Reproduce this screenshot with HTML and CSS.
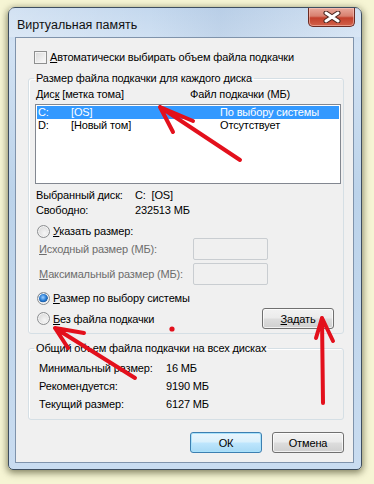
FILE: index.html
```html
<!DOCTYPE html>
<html lang="ru">
<head>
  <meta charset="UTF-8">
  <title>Виртуальная память</title>
  <link rel="stylesheet" href="styles.css">
</head>
<body>

<div class="desktop">
  <div class="dialog">
    <div class="titlebar">
      <span class="title">Виртуальная память</span>
      <button class="close" aria-label="Закрыть">
        <svg width="18" height="12" viewBox="0 0 18 12">
          <path d="M3 2 L15 10 M15 2 L3 10" stroke="#4a2620" stroke-width="5" stroke-linecap="round"/>
          <path d="M3 2 L15 10 M15 2 L3 10" stroke="#fff" stroke-width="3" stroke-linecap="round"/>
        </svg>
      </button>
    </div>

    <div class="client">
      <label class="check-row">
        <span class="checkbox"></span>
        <span><u>А</u>втоматически выбирать объем файла подкачки</span>
      </label>

      <fieldset class="group group-disks">
        <legend>Размер файла подкачки для каждого диска</legend>
        <div class="list-head">
          <span class="head-disk">Дис<u>к</u> [метка тома]</span>
          <span>Файл подкачки (МБ)</span>
        </div>
        <div class="listbox">
          <div class="list-row selected">
            <span class="col-drive">C:</span><span class="col-label">[OS]</span><span>По выбору системы</span>
          </div>
          <div class="list-row">
            <span class="col-drive">D:</span><span class="col-label">[Новый том]</span><span>Отсутствует</span>
          </div>
        </div>

        <div class="info">
          <span>Выбранный диск:</span><span>C:&nbsp;&nbsp;[OS]</span>
          <span>Свободно:</span><span>232513 МБ</span>
        </div>

        <label class="radio-row first">
          <span class="radio"></span>
          <span><u>У</u>казать размер:</span>
        </label>
        <div class="size-row">
          <span class="size-label"><u>И</u>сходный размер (МБ):</span>
          <span class="edit"></span>
        </div>
        <div class="size-row">
          <span class="size-label"><u>М</u>аксимальный размер (МБ):</span>
          <span class="edit"></span>
        </div>

        <label class="radio-row system">
          <span class="radio checked"></span>
          <span><u>Р</u>азмер по выбору системы</span>
        </label>
        <div class="last-row">
          <label class="radio-row">
            <span class="radio"></span>
            <span><u>Б</u>ез файла подкачки</span>
          </label>
          <button class="btn set-btn"><u>З</u>адать</button>
        </div>
      </fieldset>

      <fieldset class="group group-total">
        <legend>Общий объем файла подкачки на всех дисках</legend>
        <div class="totals">
          <span>Минимальный размер:</span><span>16 МБ</span>
          <span>Рекомендуется:</span><span>9190 МБ</span>
          <span>Текущий размер:</span><span>6127 МБ</span>
        </div>
      </fieldset>

      <div class="actions">
        <button class="btn default">ОК</button>
        <button class="btn">Отмена</button>
      </div>
    </div>
  </div>

  <!-- red marker annotations drawn over the dialog -->
  <svg class="marks" width="374" height="484" viewBox="0 0 374 484">
    <g stroke="#e3101c" stroke-width="4" stroke-linecap="round" fill="none">
      <path d="M240 160 L160 107 M160 107 L193 121 M160 107 L173 132"/>
      <path d="M135 378 L55 328 M55 328 L84 333 M55 328 L68 348"/>
      <path d="M323 403 L322 318 M322 318 L316 338 M322 318 L333 341"/>
    </g>
    <circle cx="172" cy="329" r="2.6" fill="#e3101c"/>
  </svg>
</div>

</body>
</html>
```

FILE: styles.css
```css
body {
  margin: 0;
  background-color: #f6f5d4;
  font-family: "Liberation Sans", Arial, sans-serif;
  font-size: 11px;
  letter-spacing: -0.15px;
  color: #000;
  white-space: nowrap;
}

u {
  text-decoration: underline;
  text-underline-offset: 1px;
}

.desktop {
  position: relative;
  width: 374px;
  height: 484px;
  padding: 7px 0 0 8px;
  box-sizing: border-box;
}

.dialog {
  width: 354px;
  height: 463px;
  box-sizing: border-box;
  display: flex;
  flex-direction: column;
  border: 1px solid #3e4e60;
  border-radius: 7px 7px 5px 5px;
  background: linear-gradient(180deg, #c4d8ee 0%, #d2e2f3 8%, #bcd3ea 40%, #c9dcf0 100%);
  box-shadow: 0 2px 7px 1px rgba(40, 40, 10, 0.55);
}

.titlebar {
  height: 29px;
  flex-shrink: 0;
  display: flex;
  align-items: flex-start;
  padding-left: 8px;
  background: linear-gradient(90deg, rgba(255,255,255,0.25), rgba(255,255,255,0) 40%, rgba(120,150,190,0.15) 60%, rgba(255,255,255,0.2));
}

.title {
  margin-top: 9px;
  line-height: 16px;
  font-size: 12.5px;
  letter-spacing: 0;
  color: #111;
}

.close {
  margin-left: auto;
  margin-right: 6px;
  width: 47px;
  height: 19px;
  padding: 0;
  border: 1px solid #6b2a22;
  border-top: none;
  border-radius: 0 0 5px 5px;
  background: linear-gradient(180deg, #e9a99c 0%, #d8806f 45%, #c3402c 55%, #d1624a 100%);
  box-shadow: inset 0 0 0 1px rgba(255, 210, 200, 0.5);
  display: flex;
  align-items: center;
  justify-content: center;
}

.client {
  flex: 1;
  min-height: 0;
  overflow: hidden;
  margin: 0 7px 6px 6px;
  border: 1px solid #7f93ab;
  background-color: #f0f0f0;
}

.check-row {
  display: flex;
  align-items: center;
  gap: 3px;
  height: 16px;
  margin: 11px 0 0 18px;
}

.checkbox {
  width: 11px;
  height: 11px;
  border: 1px solid #8e8f8f;
  background: linear-gradient(135deg, #d9d9d9, #fbfbfb);
  box-shadow: inset 0 0 0 1px #f4f4f4;
}

.group {
  margin: 5px 9px 0 12px;
  padding: 0;
  border: 1px solid #d5dfe5;
  border-radius: 3px;
  box-shadow: inset 1px 1px 0 #fff;
}

.group legend {
  margin-left: 5px;
  padding: 0 2px;
  line-height: 16px;
}

.list-head {
  display: flex;
  line-height: 16px;
  padding-left: 7px;
}

.head-disk {
  width: 154px;
}

.listbox {
  height: 80px;
  box-sizing: border-box;
  margin: 2px 2px 0 6px;
  padding: 1px;
  border: 1px solid #828790;
  background-color: #fff;
}

.list-row {
  display: flex;
  height: 13px;
  line-height: 13px;
  padding-left: 1px;
}

.list-row.selected {
  background-color: #3399ff;
  color: #fff;
}

.col-drive {
  width: 33px;
}

.col-label {
  width: 149px;
}

.info {
  display: grid;
  grid-template-columns: 99px auto;
  line-height: 15px;
  margin: 4px 0 0 7px;
}

.radio-row {
  display: flex;
  align-items: center;
  gap: 3px;
  height: 16px;
}

.radio-row.first {
  margin: 5px 0 0 8px;
}

.radio-row.system {
  margin: 5px 0 0 8px;
}

.radio {
  width: 11px;
  height: 11px;
  border: 1px solid #8c8e90;
  border-radius: 50%;
  background: radial-gradient(circle at 60% 65%, #f6f6f6 0%, #dcdcdc 70%, #cfcfcf 100%);
  box-shadow: inset 0 0 0 1px #f4f4f4;
}

.radio.checked {
  background: radial-gradient(circle at 45% 40%, #9fd0ff 0%, #2b7fd6 35%, #1c5ea8 52%, #e9e9e9 58%, #d8d8d8 100%);
}

.size-row {
  display: flex;
  align-items: center;
  height: 22px;
  margin-top: 3px;
  padding-left: 10px;
  color: #6d6d6d;
}

.radio-row.first + .size-row {
  margin-top: -1px;
}

.size-label {
  width: 154px;
}

.edit {
  width: 75px;
  height: 22px;
  box-sizing: border-box;
  border: 1px solid #c9cdd1;
  border-radius: 2px;
  background-color: #f0f0f0;
}

.last-row {
  display: flex;
  align-items: center;
  margin: 2px 0 4px 8px;
  padding-right: 9px;
}

.btn {
  width: 72px;
  height: 21px;
  padding: 0;
  font-family: inherit;
  font-size: 11px;
  letter-spacing: -0.15px;
  color: #000;
  border: 1px solid #707070;
  border-radius: 3px;
  background: linear-gradient(180deg, #f2f2f2 0%, #ebebeb 48%, #dddddd 52%, #cfcfcf 100%);
  box-shadow: inset 0 0 0 1px rgba(255, 255, 255, 0.7);
}

.set-btn {
  margin-left: auto;
}

.btn.default {
  border-color: #3c7fb1;
  background: linear-gradient(180deg, #eaf6fd 0%, #d9f0fc 48%, #bee6fd 52%, #a7d9f5 100%);
  box-shadow: inset 0 0 0 1px #a9e2fb;
}

.group-total {
  margin-top: 6px;
}

.totals {
  display: grid;
  grid-template-columns: 127px auto;
  line-height: 18px;
  margin: 3px 0 6px 10px;
}

.actions {
  display: flex;
  justify-content: flex-end;
  gap: 10px;
  margin: 12px 9px 0 0;
}

.marks {
  position: absolute;
  left: 0;
  top: 0;
  pointer-events: none;
}
```
